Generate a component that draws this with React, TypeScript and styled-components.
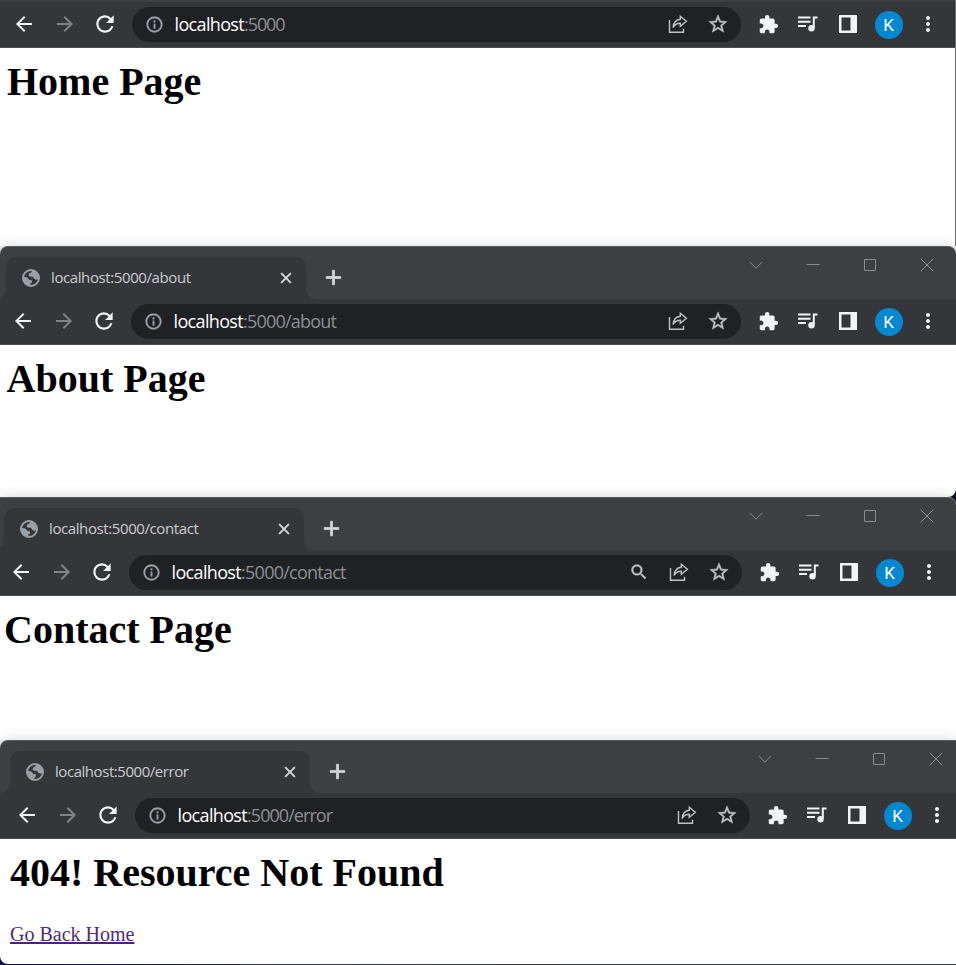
import React from 'react';
import styled, { createGlobalStyle, css } from 'styled-components';
import { MdArrowBack, MdArrowForward, MdRefresh, MdInfoOutline, MdExtension, MdStarOutline, MdMoreVert, MdSearch, MdClose, MdAdd } from 'react-icons/md';

const Global = createGlobalStyle`
  * { box-sizing: border-box; }
  body { margin: 0; background: #fff; overflow: hidden; }
  svg path[fill='none'] { stroke: none; }
`;

const ui = css`font-family: "Open Sans", "Noto Sans", sans-serif;`;

const Screen = styled.main`
  width: 956px;
  height: 965px;
  display: flex;
  flex-direction: column;
  overflow: hidden;
  background: linear-gradient(90deg, #101050, #2c3a66 30%, #3a3a44 60%);
`;

/* What shows behind a window's rounded corners: top half, then bottom half. */
const Backdrop = styled.div<{ $top: string; $bottom: string }>`
  position: relative;
  flex: none;
  background: linear-gradient(${p => p.$top} 50%, ${p => p.$bottom} 50%);
`;

const Window = styled.section<{ $height: number; $radius: string; $edge?: boolean }>`
  display: flex;
  flex-direction: column;
  height: ${p => p.$height}px;
  background: #fff;
  border-radius: ${p => p.$radius};
  box-shadow: 0 0 14px rgba(0, 0, 0, 0.16);
  ${p => p.$edge && css`border-right: 1px solid #6b6b6b;`}
`;

const TabStrip = styled.header<{ $left: number; $radius: string }>`
  display: flex;
  height: 53px;
  padding-left: ${p => p.$left}px;
  background: #3c4043;
  border-top: 1px solid #565a5c;
  border-radius: ${p => p.$radius};
`;

const Tab = styled.div`
  position: relative;
  display: flex;
  align-items: center;
  width: 300px;
  height: 42px;
  margin-top: 10px;
  padding: 0 11px 1px 16px;
  border-radius: 10px 10px 0 0;
  background: #35363a;
  color: #9aa0a6;
  &::before, &::after {
    content: '';
    position: absolute;
    bottom: 0;
    width: 10px;
    height: 10px;
  }
  &::before { left: -10px; background: radial-gradient(circle at 0 0, transparent 9.5px, #35363a 10px); }
  &::after { right: -10px; background: radial-gradient(circle at 100% 0, transparent 9.5px, #35363a 10px); }
`;

const TabTitle = styled.span<{ $spacing: number }>`
  ${ui}
  flex: 1;
  margin-left: 11px;
  padding-bottom: 2px;
  font-size: 15px;
  line-height: 20px;
  white-space: nowrap;
  letter-spacing: ${p => p.$spacing}px;
  color: #c9cccf;
`;

const TabButton = styled.span<{ $left?: number }>`
  display: flex;
  align-items: center;
  margin-left: ${p => p.$left ?? 0}px;
  color: #d5d7da;
  svg { stroke: currentColor; stroke-width: 0.7px; }
`;

const NewTab = styled(TabButton)`
  height: 41px;
  margin-top: 10px;
`;

const Captions = styled.div<{ $right: number }>`
  display: flex;
  align-items: center;
  gap: 43px;
  height: 35px;
  margin-left: auto;
  margin-right: ${p => p.$right}px;
  color: #8b8e90;
`;

const Toolbar = styled.div<{ $left: number; $first?: boolean }>`
  display: flex;
  flex: none;
  align-items: center;
  height: ${p => (p.$first ? 48 : 46)}px;
  padding: ${p => (p.$first ? 2 : 0)}px 0 1px ${p => p.$left}px;
  background: #35363a;
  border-bottom: 1px solid #4c4d50;
  ${p => p.$first && css`box-shadow: inset 0 2px #3c4043;`}
`;

const IconButton = styled.span<{ $dim?: boolean; $shift?: number }>`
  display: flex;
  flex: none;
  align-items: center;
  justify-content: center;
  width: 40px;
  height: 36px;
  padding-left: ${p => p.$shift ?? 0}px;
  color: ${p => (p.$dim ? '#828387' : '#f1f3f4')};
`;

const Omnibox = styled.div<{ $width: number }>`
  display: flex;
  flex: none;
  align-items: center;
  width: ${p => p.$width}px;
  height: 35px;
  margin: 0 7px 0 8px;
  padding: 0 3px 0 13px;
  border-radius: 18px;
  background: #202124;
  color: #9aa0a6;
  > svg { stroke: currentColor; stroke-width: 0.4px; }
`;

const Address = styled.span`
  ${ui}
  flex: 1;
  margin-left: 10.5px;
  font-size: 18px;
  line-height: 24px;
  white-space: nowrap;
  color: #8d9094;
`;

const Host = styled.span`
  color: #fff;
  letter-spacing: -0.65px;
`;

const Path = styled.span<{ $spacing: number }>`
  letter-spacing: ${p => p.$spacing}px;
`;

const InnerButton = styled(IconButton)`
  color: #bdc1c6;
  svg { stroke-width: 0.5px; stroke: currentColor; }
`;

const ShareGlyph = styled.svg`
  && { stroke-width: 1.4px; }
`;

const Avatar = styled.span`
  display: flex;
  align-items: center;
  justify-content: center;
  width: 28px;
  height: 28px;
  margin-top: 1px;
  margin-left: 1px;
  border-radius: 50%;
  background: #0488d1;
  color: #fff;
  font-family: Roboto, sans-serif;
  font-size: 17px;
  line-height: 28px;
`;

const Content = styled.div<{ $left: number }>`
  padding: 11px 0 0 ${p => p.$left}px;
  font-family: "Liberation Serif", "Times New Roman", serif;
`;

const Heading = styled.h1`
  margin: 0;
  font-size: 40px;
  line-height: 46px;
  font-weight: 700;
  color: #000;
`;

const HomeLink = styled.a`
  display: inline-block;
  margin-top: 27px;
  font-size: 20px;
  line-height: 23px;
  color: #4f2a80;
  text-decoration: underline 2px #551a8b;
  text-underline-offset: 1px;
`;

const GlobeIcon = () => (
  <svg width="18" height="18" viewBox="0 0 18 18">
    <circle cx="9" cy="9" r="8" fill="none" stroke="currentColor" strokeWidth="2" />
    <path fill="currentColor" d="M10.500 1 9.300 3.600 7 4.600l-.3 2.200 1.600 1h2.800l1.200 2.300 2.500.7L17 9.500A8.500 8.500 0 0 0 10.500 1zM1 7.800l4.300.7 1.900 2.300 2.900.8-.2 2-1.700 1.200.4 2.200A8.500 8.500 0 0 1 1 7.800z" />
  </svg>
);

const ShareIcon = () => (
  <ShareGlyph width="20" height="20" viewBox="0 0 20 20" fill="none">
    <path d="M1.500 6v12.300h14v-3.500" />
    <path d="M12.300 2.200 18.400 7.300l-6.100 5v-3c-3.400 0-5.900 1.400-7.200 4.200.3-4.700 2.600-7.800 7.200-8.300z" />
  </ShareGlyph>
);

const PanelIcon = () => (
  <svg width="18" height="18" viewBox="0 0 18 18" fill="currentColor" fillRule="evenodd">
    <path d="M0 0h18v18H0zM2.500 2.500v13h9v-13z" />
  </svg>
);

const QueueIcon = () => (
  <svg width="20" height="18" viewBox="0 0 20 18" fill="none" stroke="currentColor" strokeWidth="2">
    <path d="M0 2.500h12.500M0 6.800h12.500M0 11h8" />
    <path d="M19.500 2.500h-3.700v10.200" />
    <circle cx="13.500" cy="13.200" r="3.200" fill="currentColor" stroke="none" />
  </svg>
);

const CaptionIcon = ({ d }: { d: string }) => (
  <svg width="14" height="14" viewBox="0 0 14 14" fill="none" stroke="currentColor" strokeWidth="1">
    <path d={d} />
  </svg>
);

const captionPaths = [
  'M.8 4l6.200 6.200L13.200 4',
  'M.5 6.500h13',
  'M2 1.500h10q.5 0 .5.500v10q0 .5-.5.500H2q-.5 0-.5-.500V2q0-.5.5-.500z',
  'M.7.7l12.600 12.600M13.300.7.7 13.300',
];

type BrowserProps = {
  path: string;
  title: string;
  height: number;
  radius?: string;
  behindTop?: string;
  behindBottom?: string;
  tabLeft?: number;
  tabSpacing?: number;
  pathSpacing: number;
  navLeft: number;
  boxWidth: number;
  contentLeft: number;
  captionRight?: number;
  search?: boolean;
  link?: string;
};

const Browser = (p: BrowserProps) => {
  const first = p.tabLeft === undefined;
  const radius = p.radius ?? '0';
  return (
    <Backdrop $top={p.behindTop ?? '#f0f0f0'} $bottom={p.behindBottom ?? '#fff'}>
      <Window $height={p.height} $radius={radius} $edge={first}>
        {!first && (
          <TabStrip $left={p.tabLeft!} $radius={radius.split(' ').slice(0, 2).join(' ') + ' 0 0'}>
            <Tab>
              <GlobeIcon />
              <TabTitle $spacing={p.tabSpacing ?? 0}>localhost:5000{p.path}</TabTitle>
              <TabButton><MdClose size={18} /></TabButton>
            </Tab>
            <NewTab $left={15}><MdAdd size={25} /></NewTab>
            <Captions $right={p.captionRight ?? 0}>
              {captionPaths.map(d => <CaptionIcon key={d} d={d} />)}
            </Captions>
          </TabStrip>
        )}
        <Toolbar $left={p.navLeft} $first={first}>
          <IconButton><MdArrowBack size={24} /></IconButton>
          <IconButton $dim $shift={1}><MdArrowForward size={24} /></IconButton>
          <IconButton $shift={1}><MdRefresh size={26} /></IconButton>
          <Omnibox $width={p.boxWidth}>
            <MdInfoOutline size={19} />
            <Address>
              <Host>localhost</Host><Path $spacing={p.pathSpacing}>:5000{p.path}</Path>
            </Address>
            {p.search && <InnerButton><MdSearch size={20} /></InnerButton>}
            <InnerButton><ShareIcon /></InnerButton>
            <InnerButton><MdStarOutline size={22} /></InnerButton>
          </Omnibox>
          <IconButton><MdExtension size={21} /></IconButton>
          <IconButton><QueueIcon /></IconButton>
          <IconButton><PanelIcon /></IconButton>
          <IconButton><Avatar>K</Avatar></IconButton>
          <IconButton><MdMoreVert size={24} /></IconButton>
        </Toolbar>
        <Content $left={p.contentLeft}>
          <Heading>{p.title}</Heading>
          {p.link && <HomeLink href="#">{p.link}</HomeLink>}
        </Content>
      </Window>
    </Backdrop>
  );
};

export default function App() {
  return (
    <>
      <Global />
      <Screen>
        <Browser path="" title="Home Page" height={246} navLeft={4} boxWidth={609} contentLeft={7} pathSpacing={-1.1} />
        <Browser path="/about" title="About Page" height={251} radius="8px 8px 8px 0" behindBottom="#0c1020" tabLeft={6} navLeft={3} boxWidth={610} contentLeft={6.5} captionRight={22} tabSpacing={-0.4} pathSpacing={-0.8} />
        <Browser path="/contact" title="Contact Page" height={243} radius="0 8px 0 0" behindTop="#0c1020" tabLeft={4} navLeft={1} boxWidth={613} contentLeft={4} captionRight={22} tabSpacing={-0.4} pathSpacing={-0.75} search />
        <Browser path="/error" title="404! Resource Not Found" height={224} radius="8px 0 0 8px" behindBottom="#101050" tabLeft={10} navLeft={7} boxWidth={615} contentLeft={10} captionRight={13} tabSpacing={-0.45} pathSpacing={-0.95} link="Go Back Home" />
      </Screen>
    </>
  );
}
